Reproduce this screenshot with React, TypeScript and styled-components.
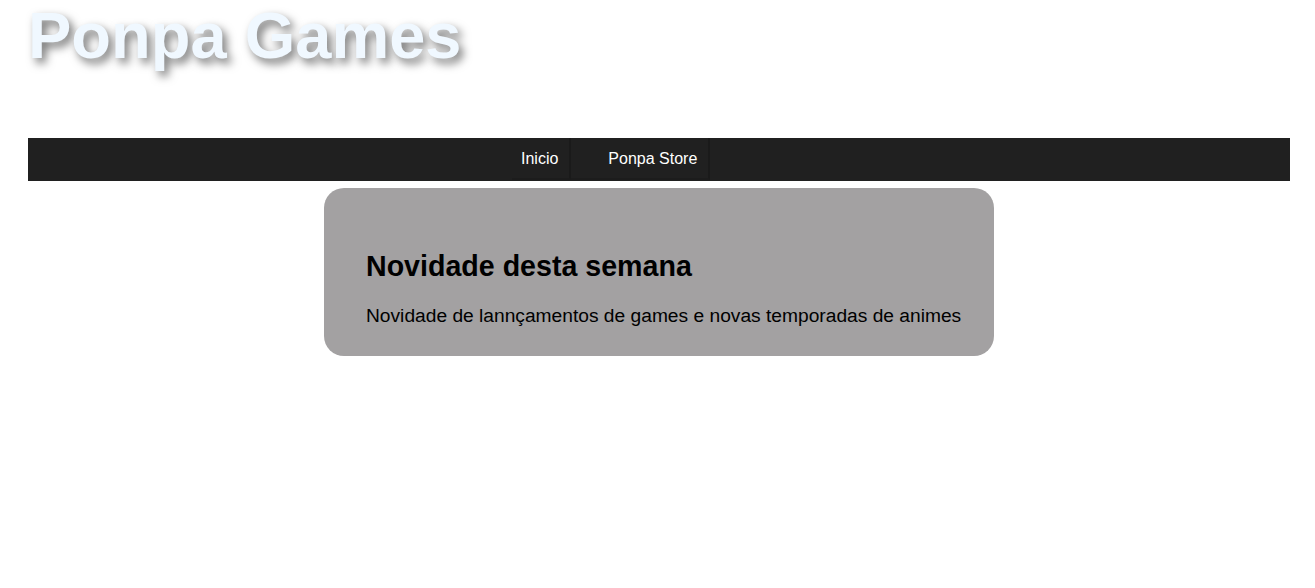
import React from "react";
import styled, { createGlobalStyle } from "styled-components";

const Global = createGlobalStyle`
  html, body { margin: 0; padding: 0; background: #ffffff; }
  body { font-family: "Liberation Sans", Arial, sans-serif; }
`;

const Page = styled.div`
  padding: 0 25px 0 28px;
`;

const Title = styled.h1`
  margin: -1px 0 0 0;
  padding: 0;
  font-size: 65px;
  font-weight: 700;
  line-height: 74px;
  color: #f0f8ff;
  text-shadow: 4px 5px 10px #737373;
`;

const Nav = styled.nav`
  margin-top: 65px;
  height: 43px;
  background: #202020;
`;

const NavList = styled.ul`
  list-style: none;
  margin: 0;
  padding: 0 0 0 484px;
  display: flex;
  align-items: flex-start;
  height: 100%;
`;

const NavItem = styled.li<{ $lead: number }>`
  padding: 12px 11px 10px ${(p) => p.$lead}px;
  border-right: 2px solid #1a1a1a;
  border-bottom: 2px solid #1c1c1c;
  font-size: 16px;
  line-height: 18px;
  color: #ffffff;
`;

const Card = styled.section`
  width: 670px;
  box-sizing: border-box;
  margin: 7px auto 0;
  padding: 62px 10px 29px 42px;
  background: #a3a1a2;
  border-radius: 20px;
`;

const Heading = styled.h2`
  margin: 0 0 23px;
  font-size: 28.6px;
  font-weight: 700;
  line-height: 32px;
  color: #000000;
`;

const Text = styled.p`
  margin: 0;
  font-size: 19.2px;
  line-height: 22px;
  color: #000000;
  white-space: nowrap;
`;

export default function App() {
  return (
    <>
      <Global />
      <Page>
        <Title>Ponpa Games</Title>
        <Nav>
          <NavList>
            <NavItem $lead={9}>Inicio</NavItem>
            <NavItem $lead={37}>Ponpa Store</NavItem>
          </NavList>
        </Nav>
        <Card>
          <Heading>Novidade desta semana</Heading>
          <Text>Novidade de lannçamentos de games e novas temporadas de animes</Text>
        </Card>
      </Page>
    </>
  );
}
